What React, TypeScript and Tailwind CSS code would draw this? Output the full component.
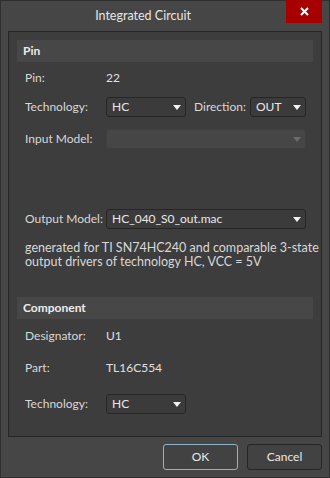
import React from "react";

function Select({
  value,
  width,
  disabled,
}: {
  value?: string;
  width: string;
  disabled?: boolean;
}) {
  return (
    <div
      className={`${width} flex h-[20px] shrink-0 items-center justify-between rounded-[3px] border pl-[5px] pr-[4px] ${
        disabled
          ? "border-[#3f3f3f] bg-[#464646]"
          : "border-[#262626] bg-[#3b3b3b]"
      }`}
    >
      <span className="whitespace-nowrap text-[#e8e8e8]">{value}</span>
      <svg width="8" height="5" viewBox="0 0 8 5">
        <path d="M0 0h8L4 5z" fill={disabled ? "#6a6a6a" : "#f2f2f2"} />
      </svg>
    </div>
  );
}

function Row({
  label,
  children,
  className = "",
}: {
  label: string;
  children: React.ReactNode;
  className?: string;
}) {
  return (
    <div className={`flex h-[20px] items-center ${className}`}>
      <span className="w-[89px] shrink-0 whitespace-nowrap pl-[8px] text-[#d8d8d8]">
        {label}
      </span>
      {children}
    </div>
  );
}

export default function App() {
  return (
    <div
      className="flex h-[478px] w-[330px] flex-col border border-[#2f2f2f] bg-[#464646] text-[12px] text-[#dcdcdc]"
      style={{ fontFamily: "Lato, 'Noto Sans', sans-serif" }}
    >
      {/* Title bar */}
      <div className="relative flex h-[30px] shrink-0 items-center justify-center pr-[44px]">
        <span className="text-[12.5px] text-[#e6e6e6]">Integrated Circuit</span>
        <div className="absolute -top-px right-[7px] flex h-[23px] w-[36px] items-center justify-center bg-[#a60000]">
          <svg width="9" height="9" viewBox="0 0 9 9">
            <path d="M1 1l7 7M8 1L1 8" stroke="#fff" strokeWidth="2" />
          </svg>
        </div>
      </div>

      {/* Content panel */}
      <div className="mx-[7px] flex h-[406px] flex-col border border-[#262626] bg-[#3d3d3d] px-[8px] pt-[8px]">
        <div className="flex h-[22px] items-center bg-[#474747] px-[6px] font-bold text-[#ececec]">
          Pin
        </div>

        <Row label="Pin:" className="mt-[6px]">
          <span className="text-[#e0e0e0]">22</span>
        </Row>

        <Row label="Technology:" className="mt-[9px]">
          <Select value="HC" width="w-[80px]" />
          <span className="ml-[8px] w-[56px] whitespace-nowrap text-[#d8d8d8]">Direction:</span>
          <Select value="OUT" width="w-[56px]" />
        </Row>

        <Row label="Input Model:" className="mt-[12px]">
          <Select width="w-[200px]" disabled />
        </Row>

        <Row label="Output Model:" className="mt-[60px]">
          <Select value="HC_040_S0_out.mac" width="w-[200px]" />
        </Row>

        <div className="mt-[12px] pl-[8px] text-[12.5px] leading-[14px] text-[#d8d8d8]">
          <div className="whitespace-nowrap">generated for TI SN74HC240 and comparable 3-state</div>
          <div className="whitespace-nowrap">output drivers of technology HC, VCC = 5V</div>
        </div>

        <div className="mt-[28px] flex h-[22px] items-center bg-[#474747] px-[6px] font-bold text-[#ececec]">
          Component
        </div>

        <Row label="Designator:" className="mt-[7px]">
          <span className="text-[#e0e0e0]">U1</span>
        </Row>

        <Row label="Part:" className="mt-[12px]">
          <span className="text-[#e0e0e0]">TL16C554</span>
        </Row>

        <Row label="Technology:" className="mt-[16px]">
          <Select value="HC" width="w-[80px]" />
        </Row>
      </div>

      {/* Buttons */}
      <div className="mt-[7px] flex justify-end gap-[9px] pr-[7px]">
        <button className="h-[26px] w-[75px] rounded-[3px] border border-[#8fb3c9] bg-[#424242] text-[12px] text-[#e8e8e8]">
          OK
        </button>
        <button className="h-[26px] w-[75px] rounded-[3px] border border-[#262626] bg-[#424242] text-[12px] text-[#e8e8e8]">
          Cancel
        </button>
      </div>
    </div>
  );
}
